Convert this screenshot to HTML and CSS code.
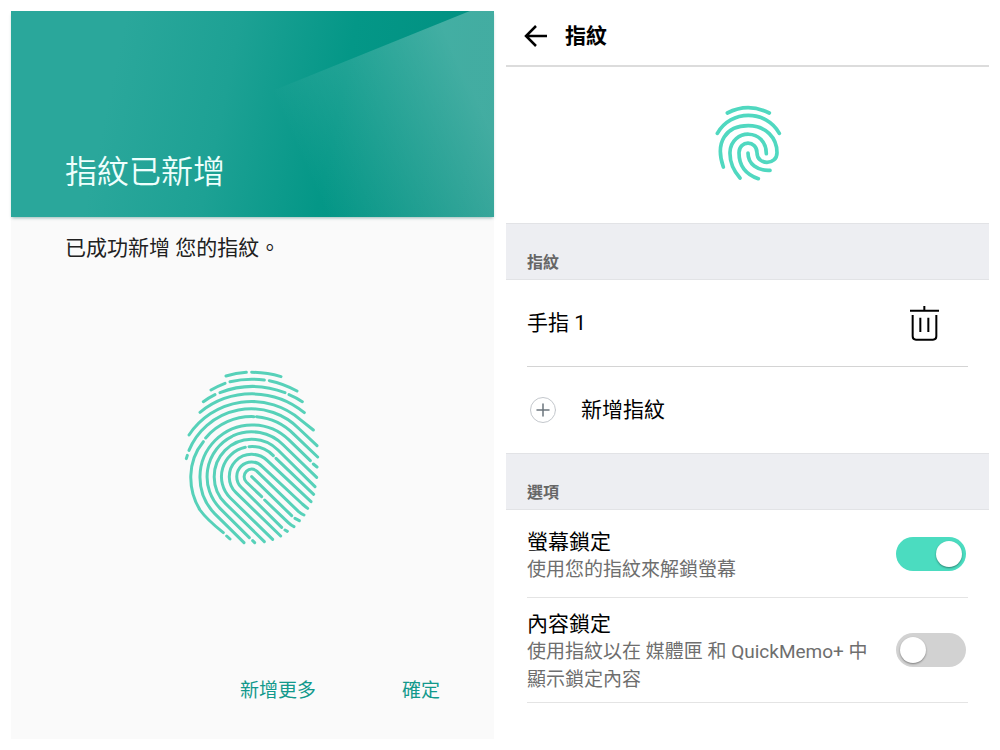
FILE: index.html
```
<!DOCTYPE html>
<html lang="zh-TW">
<head>
	<meta charset="utf-8">
	<meta name="viewport" content="width=device-width, initial-scale=1">
	<title>指紋</title>
	<link rel="stylesheet" href="styles.css">
</head>
<body>
	<section class="screen added">
		<header class="banner">
			<h1>指紋已新增</h1>
		</header>
		<p class="message">已成功新增 您的指紋。</p>
		<svg class="print-large" viewBox="30 15 435 555" aria-hidden="true">
			<!-- outer ridges, top to bottom -->
			<path d="M168 48A313 313 0 0 1 229 37M245 37A313 313 0 0 1 333 50"/>
			<path d="M123 90A292 292 0 0 1 165 70M180 65A292 292 0 0 1 283 60M298 62A292 292 0 0 1 381 93"/>
			<path d="M100 125A270 270 0 0 1 135 104M150 98A270 270 0 0 1 345 98M357 104A270 270 0 0 1 397 125"/>
			<path d="M90 157A247 247 0 0 1 403 158"/>
			<path d="M57 225A225 225 0 0 1 390 178L430 210"/>
			<path d="M49 296L52 286M57 271A202 202 0 0 1 388 207L441 257"/>
			<!-- loops -->
			<path d="M107 234A180 180 0 0 1 252 170M260 170A180 180 0 0 1 372 223L443 291M100 245C50 305 53 390 90 450Q110 478 160 518M170 528L180 537"/>
			<path d="M222 548L134 461A157 157 0 0 1 356 239L421 302M430 312L441 321"/>
			<path d="M190 227A135 135 0 0 1 340 255L440 352M185 230A135 135 0 0 0 150 445L238 533M248 542L254 548"/>
			<path d="M283 545L166 430A112 112 0 0 1 324 270L435 380"/>
			<path d="M237 260A90 90 0 0 1 310 287M318 295L431 403M226 262A90 90 0 0 0 181 414L308 538"/>
			<path d="M332 528L198 398A67 67 0 0 1 292 302L423 425"/>
			<path d="M335 502L213 381A44 44 0 0 1 276 319L397 432Q405 439 413 445M345 510L352 514"/>
			<path d="M275 410L229 366A22 22 0 0 1 261 334L385 454Q393 461 402 465M284 420L355 488Q362 495 372 500"/>
			<path d="M245 350L365 467M375 475L388 482"/>
		</svg>
		<div class="actions">
			<button type="button">新增更多</button>
			<button type="button">確定</button>
		</div>
	</section>

	<section class="screen settings">
		<header class="topbar">
			<button type="button" class="back" aria-label="返回">
				<svg viewBox="0 0 24 24" aria-hidden="true"><path d="M23 12H3M12 2L2 12L12 22"/></svg>
			</button>
			<h1>指紋</h1>
		</header>
		<div class="hero">
			<svg class="print-small" viewBox="40 25 204 240" aria-hidden="true">
				<path d="M80 55Q142 23 206 55"/>
				<path d="M50 116C90 44 196 44 236 116"/>
				<path d="M68 217C42 142 76 93 143 93C196 93 229 130 229 174C229 213 169 213 169 174C169 136 115 136 115 174C115 214 138 240 173 252"/>
				<path d="M118 250C92 220 87 196 88 172C92 100 197 100 197 177"/>
				<path d="M142 175C142 208 170 229 208 227"/>
			</svg>
		</div>

		<h2 class="section">指紋</h2>
		<ul class="list">
			<li class="item finger">
				<span>手指 1</span>
				<button type="button" class="trash" aria-label="刪除">
					<svg viewBox="87 42 93 111" aria-hidden="true">
						<path d="M90 59H177M133 45V59"/>
						<path d="M98 72V136Q98 146 108 146H159Q169 146 169 136V72"/>
						<path d="M121 80V123M145 80V123"/>
					</svg>
				</button>
			</li>
			<li class="item">
				<button type="button" class="add">
					<svg viewBox="0 0 26 26" aria-hidden="true">
						<circle cx="13" cy="13" r="12.5"/>
						<path d="M7 13H19M13 7V19"/>
					</svg>
					新增指紋
				</button>
			</li>
		</ul>

		<h2 class="section">選項</h2>
		<ul class="list">
			<li class="option">
				<label for="screenLock">
					<span class="name">螢幕鎖定</span>
					<span class="desc">使用您的指紋來解鎖螢幕</span>
				</label>
				<input type="checkbox" class="switch" id="screenLock" checked>
			</li>
			<li class="option">
				<label for="contentLock">
					<span class="name">內容鎖定</span>
					<span class="desc">使用指紋以在 媒體匣 和 QuickMemo+ 中顯示鎖定內容</span>
				</label>
				<input type="checkbox" class="switch" id="contentLock">
			</li>
		</ul>
	</section>
</body>
</html>
```
FILE: styles.css
```
*
{
	box-sizing: border-box;
}
body
{
	display: flex;
	gap: 12px;
	margin: 0;
	padding: 11px;
	background: #fff;
	color: #000;
	font-family: Roboto, "Noto Sans CJK TC", sans-serif;
	font-size: 21px;
	line-height: 28px;
}
h1, h2, p, ul
{
	margin: 0;
	padding: 0;
}
ul
{
	list-style: none;
}
button
{
	padding: 0;
	border: none;
	background: none;
	color: inherit;
	font: inherit;
	cursor: pointer;
}
svg
{
	display: block;
	fill: none;
	stroke-linecap: round;
}
.screen
{
	flex: 1;
	min-width: 0;
	min-height: calc(100vh - 22px);
}

/* Fingerprint added */
.added
{
	display: flex;
	flex-direction: column;
	background: #fafafa;
}
.banner
{
	position: relative;
	display: flex;
	align-items: flex-end;
	min-height: 206px;
	padding: 0 54px 25px;
	background: linear-gradient(102deg, #2aa79b 22%, #1da194 44%, #049787 66%, #008e7f);
	box-shadow: 0 2px 3px -1px rgba(0, 90, 80, 0.4);
	color: #effffd;
}
/* light fold on the right of the banner */
.banner::before
{
	content: "";
	position: absolute;
	inset: 0;
	background: linear-gradient(66deg, transparent 55%, rgba(255, 255, 255, 0.26) 90%);
	clip-path: polygon(95% 0, 100% 0, 100% 100%, 0 100%, 0 90%);
}
.banner h1
{
	position: relative;
	font-size: 32px;
	font-weight: 350;
	line-height: 40px;
}
.message
{
	padding: 17px 54px 0;
	color: #212121;
}
.print-large
{
	width: 145px;
	height: 185px;
	margin: 103px auto 0;
	stroke: #57d1b9;
	stroke-width: 9;
}
.actions
{
	display: flex;
	justify-content: flex-end;
	gap: 86px;
	margin-top: auto;
	padding: 0 54px 34px;
	color: #12998c;
	font-size: 19px;
}

/* Fingerprint settings */
.topbar
{
	display: flex;
	align-items: center;
	gap: 17px;
	padding: 11px 18px 15px;
	border-bottom: 2px solid #dcdcdc;
}
.topbar h1
{
	font-size: 21px;
	font-weight: bold;
}
.back svg
{
	width: 24px;
	height: 24px;
	stroke: #000;
	stroke-width: 2.5;
	stroke-linecap: butt;
}
.hero
{
	padding: 36px 0 40px;
}
.print-small
{
	width: 68px;
	height: 80px;
	margin: 0 auto;
	stroke: #50d8c0;
	stroke-width: 11;
}
.section
{
	padding: 27px 21px 4px;
	border: solid #e2e3e6;
	border-width: 1px 0;
	background: #edeef2;
	color: #666;
	font-size: 16px;
	font-weight: bold;
	line-height: 24px;
}
.list
{
	padding: 0 21px;
}
.item
{
	display: flex;
	align-items: center;
	min-height: 86px;
}
.finger
{
	justify-content: space-between;
	min-height: 87px;
	border-bottom: 1px solid #d4d4d4;
}
.trash
{
	margin-right: 28px;
}
.trash svg
{
	width: 31px;
	height: 37px;
	stroke: #000;
	stroke-width: 6;
	stroke-linecap: butt;
}
.add
{
	display: flex;
	align-items: center;
	gap: 25px;
	padding-left: 3px;
}
.add svg
{
	width: 26px;
	height: 26px;
	stroke: #c3c7cc;
}
.add path
{
	stroke: #6c757d;
	stroke-width: 1.5;
}
.option
{
	display: flex;
	align-items: center;
	gap: 16px;
	min-height: 88px;
	padding: 12px 2px 8px 0;
	border-bottom: 1px solid #e4e4e4;
}
.option label
{
	flex: 1;
}
.name, .desc
{
	display: block;
}
.desc
{
	color: #6e6e6e;
	font-size: 19px;
}
.switch
{
	appearance: none;
	flex: none;
	width: 70px;
	height: 34px;
	margin: 0 0 4px;
	padding: 4px;
	border-radius: 17px;
	background: #d2d2d2;
	cursor: pointer;
}
.switch::before
{
	content: "";
	display: block;
	width: 26px;
	height: 26px;
	border-radius: 50%;
	background: #fff;
	box-shadow: 0 1px 2px rgba(0, 0, 0, 0.4);
}
.switch:checked
{
	background: #4bdcc0;
}
.switch:checked::before
{
	margin-left: auto;
}
```
